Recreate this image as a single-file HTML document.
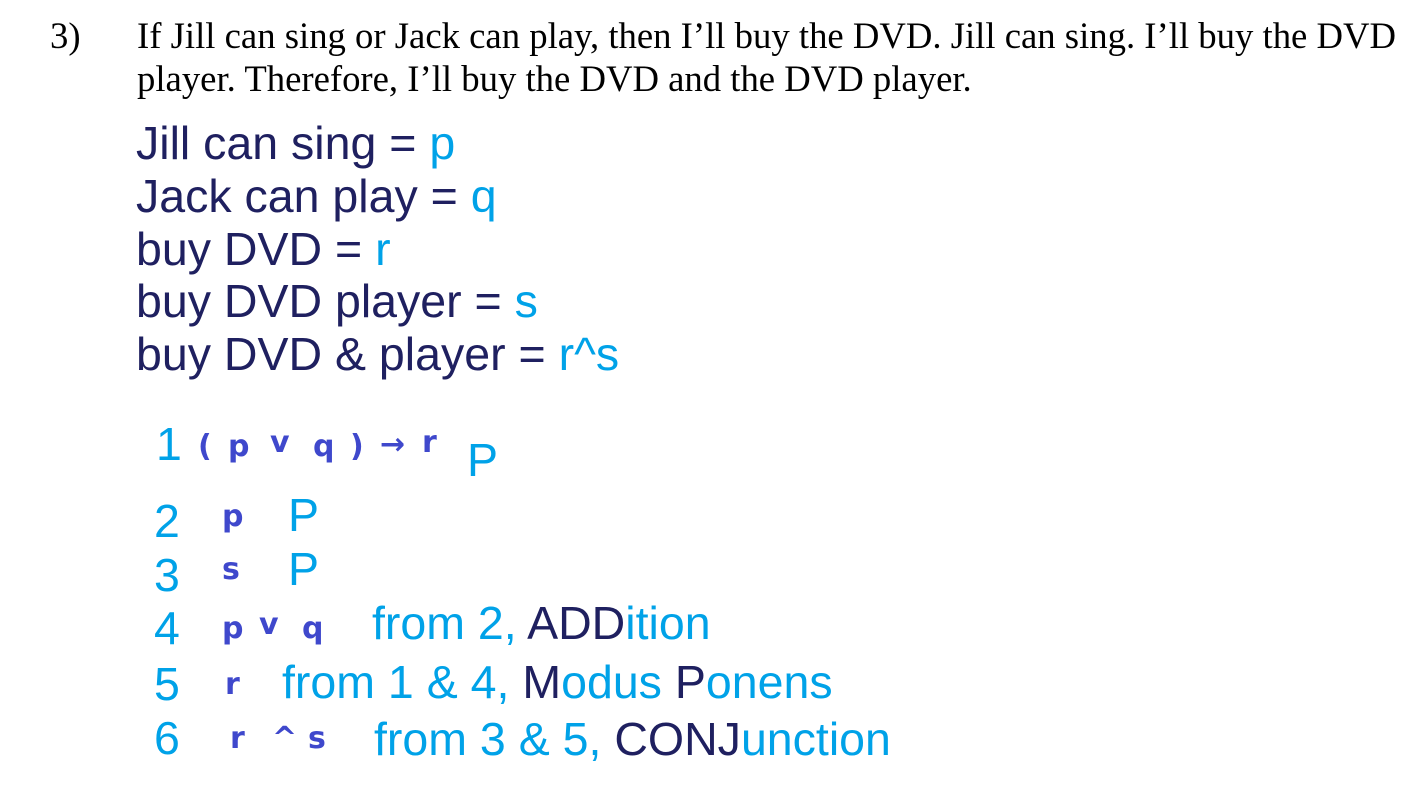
<!DOCTYPE html>
<html><head><style>
body{margin:0;width:1422px;height:785px;background:#fff;position:relative;overflow:hidden}
.a{position:absolute;white-space:nowrap}
.s{font-family:"Liberation Serif",serif;font-size:36.7px;color:#000}
.n{font-family:"Liberation Sans",sans-serif;font-size:46.5px;color:#1f2060;line-height:1}
.p{font-family:"Liberation Sans",sans-serif;font-size:46.5px;color:#00a2e8;line-height:1}
.b{color:#00a2e8}
.h{font-family:"DejaVu Sans",sans-serif;font-size:30px;color:#3f48cc;font-weight:bold;line-height:1}
</style></head><body>
<div class="a s" style="left:50px;top:14px">3)</div>
<div class="a s" style="left:137px;top:14px">If Jill can sing or Jack can play, then I’ll buy the DVD. Jill can sing. I’ll buy the DVD</div>
<div class="a s" style="left:137px;top:57px">player. Therefore, I’ll buy the DVD and the DVD player.</div>

<div class="a n" style="left:136px;top:120px">Jill can sing = <span class="b">p</span></div>
<div class="a n" style="left:136px;top:173px">Jack can play = <span class="b">q</span></div>
<div class="a n" style="left:136px;top:226px">buy DVD = <span class="b">r</span></div>
<div class="a n" style="left:136px;top:278px">buy DVD player = <span class="b">s</span></div>
<div class="a n" style="left:136px;top:331px">buy DVD &amp; player = <span class="b">r^s</span></div>

<div class="a p" style="left:156px;top:421px">1</div>
<div class="a h" style="left:198px;top:432px">(</div>
<div class="a h" style="left:228px;top:432px">p</div>
<div class="a h" style="left:270px;top:428px">v</div>
<div class="a h" style="left:313px;top:432px">q</div>
<div class="a h" style="left:350px;top:432px">)</div>
<div class="a h" style="left:380px;top:430px">→</div>
<div class="a h" style="left:422px;top:428px">r</div>
<div class="a p" style="left:467px;top:437px">P</div>

<div class="a p" style="left:154px;top:498px">2</div>
<div class="a h" style="left:222px;top:502px">p</div>
<div class="a p" style="left:288px;top:492px">P</div>

<div class="a p" style="left:154px;top:552px">3</div>
<div class="a h" style="left:222px;top:555px">s</div>
<div class="a p" style="left:288px;top:546px">P</div>

<div class="a p" style="left:154px;top:605px">4</div>
<div class="a h" style="left:222px;top:614px">p</div>
<div class="a h" style="left:259px;top:610px">v</div>
<div class="a h" style="left:302px;top:614px">q</div>
<div class="a p" style="left:372px;top:600px">from 2, <span style="color:#1f2060">ADD</span>ition</div>

<div class="a p" style="left:154px;top:661px">5</div>
<div class="a h" style="left:225px;top:670px">r</div>
<div class="a p" style="left:282px;top:659px">from 1 &amp; 4, <span style="color:#1f2060">M</span>odus <span style="color:#1f2060">P</span>onens</div>

<div class="a p" style="left:154px;top:715px">6</div>
<div class="a h" style="left:230px;top:724px">r</div>
<div class="a h" style="left:272px;top:724px">^</div>
<div class="a h" style="left:308px;top:724px">s</div>
<div class="a p" style="left:374px;top:716px">from 3 &amp; 5, <span style="color:#1f2060">CONJ</span>unction</div>
</body></html>
